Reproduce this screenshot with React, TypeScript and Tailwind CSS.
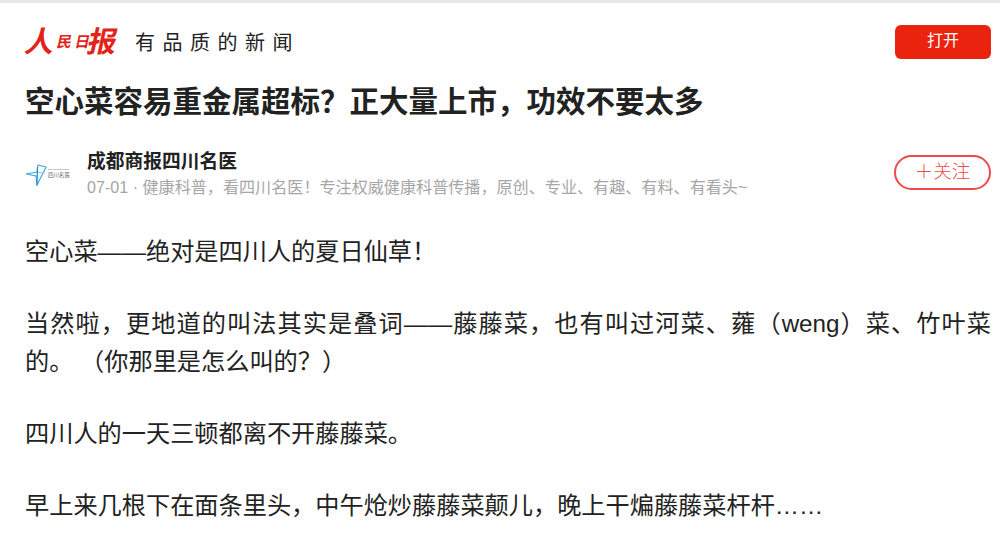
const paragraphs = [
  "空心菜——绝对是四川人的夏日仙草\uFF01",
  "当然啦\uFF0C更地道的叫法其实是叠词——藤藤菜\uFF0C也有叫过河菜、蕹\uFF08weng\uFF09菜、竹叶菜的。 \uFF08你那里是怎么叫的\uFF1F\uFF09",
  "四川人的一天三顿都离不开藤藤菜。",
  "早上来几根下在面条里头\uFF0C中午炝炒藤藤菜颠儿\uFF0C晚上干煸藤藤菜杆杆……",
];

const title = "空心菜容易重金属超标\uFF1F正大量上市\uFF0C功效不要太多";
const sourceDesc = "07-01 · 健康科普\uFF0C看四川名医\uFF01专注权威健康科普传播\uFF0C原创、专业、有趣、有料、有看头~";

function SourceLogo() {
  return (
    <svg width="46" height="26" viewBox="0 0 46 26" fill="none" className="shrink-0">
      <path d="M1 13 L12 11 L13 4 L21 6 L12 24 L11 15 Z" stroke="#3ba7dc" strokeWidth="1.1" />
      <path d="M12 11 L20 12" stroke="#8fcbea" strokeWidth="1" />
      <path d="M12.5 6 L12 24" stroke="#1d8fd0" strokeWidth="1.2" />
      <rect x="23" y="8" width="21" height="1" fill="#c9c9c9" />
      <text x="23" y="16" fontSize="5.5" fill="#666" fontFamily="'Noto Sans CJK SC', sans-serif">四川名医</text>
    </svg>
  );
}

function PaperLogo() {
  return (
    <div className="flex w-[87px] -skew-x-12 items-center font-bold whitespace-nowrap text-[#e2231a]">
      <span className="text-[29px] leading-[34px]">人</span>
      <span className="ml-[2px] text-[15px] leading-[34px]">民</span>
      <span className="ml-[3px] text-[15px] leading-[34px]">日</span>
      <span className="ml-[-2px] text-[29px] leading-[34px]">报</span>
    </div>
  );
}

export default function App() {
  return (
    <div className="h-[538px] w-[1000px] overflow-hidden bg-white font-['Liberation_Sans','Noto_Sans_CJK_SC',sans-serif] text-[#222]">
      <div className="h-[3px] bg-[#e8e8e8]" />

      <header className="flex items-center justify-between pl-[26px] pr-[9px] pt-[21px]">
        <div className="flex items-center">
          <PaperLogo />
          <span className="ml-[22px] pt-[2px] text-[20px] leading-[34px] tracking-[7.5px] whitespace-nowrap text-[#222]">
            有品质的新闻
          </span>
        </div>
        <button className="h-[34px] w-[96px] rounded-md bg-[#ea230f] pb-[2px] text-[16px] text-white">打开</button>
      </header>

      <h1 className="mt-[24px] pl-[25px] text-[29.5px] leading-[36px] font-bold whitespace-nowrap text-[#222]">
        {title}
      </h1>

      <div className="mt-[29px] flex items-center justify-between pl-[25px] pr-[9px]">
        <div className="flex items-center">
          <SourceLogo />
          <div className="ml-[16px]">
            <div className="text-[18.75px] leading-[26px] font-bold whitespace-nowrap text-[#222]">成都商报四川名医</div>
            <div className="text-[16.1px] leading-[24px] whitespace-nowrap text-[#a6a6a6]">{sourceDesc}</div>
          </div>
        </div>
        <button className="mb-[3px] h-[35px] w-[97px] rounded-full border-2 border-[#ee4a4a] text-[18.5px] leading-none font-light text-[#ee4a4a]">
          {"\uFF0B关注"}
        </button>
      </div>

      <article className="mt-[34px] flex flex-col gap-[34px] pl-[25px] pr-[9px]">
        {paragraphs.map((text) => (
          <p key={text} className="text-justify text-[24.2px] leading-[38px] text-[#222]">
            {text}
          </p>
        ))}
      </article>
    </div>
  );
}
